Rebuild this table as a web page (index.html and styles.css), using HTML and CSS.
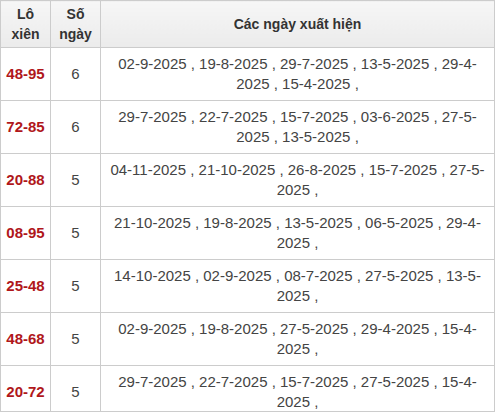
FILE: index.html
```html
<!DOCTYPE html>
<html lang="vi">
<head>
<meta charset="utf-8">
<link rel="stylesheet" href="styles.css">
</head>
<body>
<div class="frame">
<table class="lo-table">
  <colgroup>
    <col class="c1"><col class="c2"><col class="c3">
  </colgroup>
  <thead>
    <tr>
      <th>Lô xiên</th>
      <th>Số ngày</th>
      <th>Các ngày xuất hiện</th>
    </tr>
  </thead>
  <tbody>
    <tr><td class="pair">48-95</td><td class="num">6</td><td class="dates">02-9-2025 , 19-8-2025 , 29-7-2025 , 13-5-2025 , 29-4-2025 , 15-4-2025 ,</td></tr>
    <tr><td class="pair">72-85</td><td class="num">6</td><td class="dates">29-7-2025 , 22-7-2025 , 15-7-2025 , 03-6-2025 , 27-5-2025 , 13-5-2025 ,</td></tr>
    <tr><td class="pair">20-88</td><td class="num">5</td><td class="dates">04-11-2025 , 21-10-2025 , 26-8-2025 , 15-7-2025 , 27-5-2025 ,</td></tr>
    <tr><td class="pair">08-95</td><td class="num">5</td><td class="dates">21-10-2025 , 19-8-2025 , 13-5-2025 , 06-5-2025 , 29-4-2025 ,</td></tr>
    <tr><td class="pair">25-48</td><td class="num">5</td><td class="dates">14-10-2025 , 02-9-2025 , 08-7-2025 , 27-5-2025 , 13-5-2025 ,</td></tr>
    <tr><td class="pair">48-68</td><td class="num">5</td><td class="dates">02-9-2025 , 19-8-2025 , 27-5-2025 , 29-4-2025 , 15-4-2025 ,</td></tr>
    <tr><td class="pair">20-72</td><td class="num">5</td><td class="dates">29-7-2025 , 22-7-2025 , 15-7-2025 , 27-5-2025 , 15-4-2025 ,</td></tr>
  </tbody>
</table>
</div>
</body>
</html>
```
FILE: styles.css
```css
html, body {
  margin: 0;
  padding: 0;
  background: #ffffff;
}
body {
  font-family: "Liberation Sans", Arial, sans-serif;
  color: #333333;
}
.frame {
  width: 495px;
  height: 411px;
  overflow: hidden;
  border-bottom: 1px solid #cccccc;
}
.lo-table {
  border-collapse: collapse;
  table-layout: fixed;
  width: 495px;
}
.c1 { width: 50px; }
.c2 { width: 50px; }
.lo-table th,
.lo-table td {
  border: 1px solid #cccccc;
  text-align: center;
  vertical-align: middle;
  line-height: 20px;
}
.lo-table th {
  height: 47px;
  padding: 0 4px;
  box-sizing: border-box;
  font-size: 14px;
  font-weight: bold;
  color: #333333;
  background: linear-gradient(#f6f6f6, #ebebeb);
}
.lo-table td {
  height: 53px;
  box-sizing: border-box;
  padding: 6px 8px;
  font-size: 15px;
  color: #444444;
}
.lo-table td.pair {
  padding: 6px 2px;
  font-weight: bold;
  color: #b0171b;
}
.lo-table td.num {
  padding: 6px 2px;
}
```
